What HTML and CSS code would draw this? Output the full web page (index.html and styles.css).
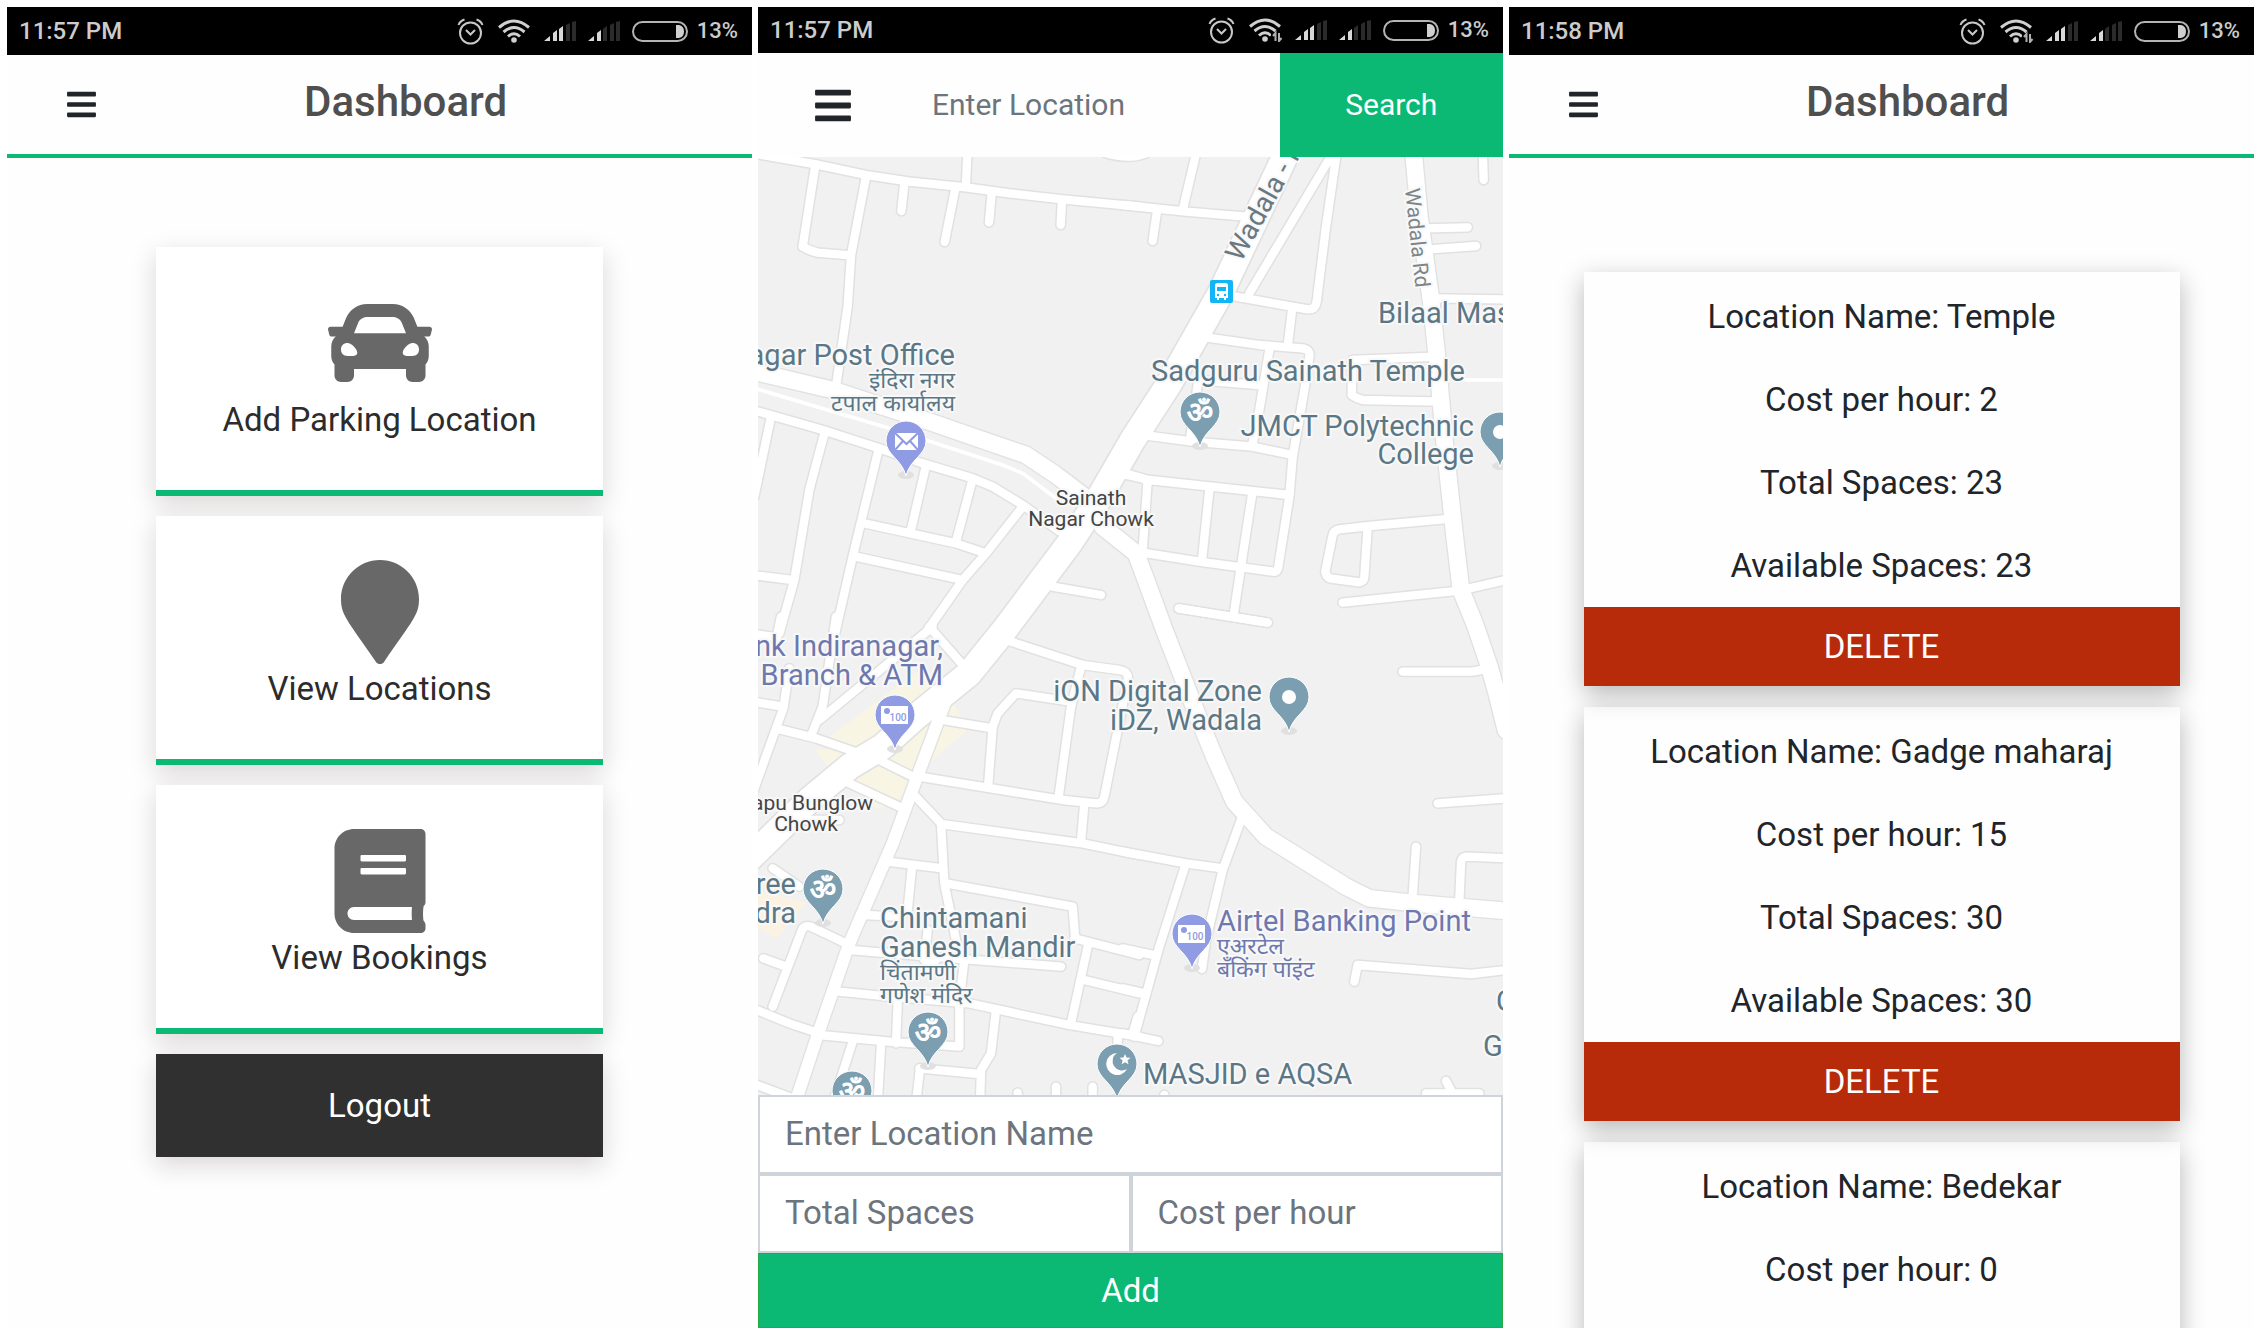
FILE: index.html
```html
<!DOCTYPE html>
<html lang="en">
<head>
<meta charset="utf-8">
<meta name="viewport" content="width=device-width, initial-scale=1">
<title>Parking dashboard</title>
<link rel="stylesheet" href="styles.css">
</head>
<body>
<svg class="defs" aria-hidden="true">
  <defs>
    <symbol id="i-alarm" viewBox="0 0 27 27"><g fill="none" stroke="#c8c8c8" stroke-width="2"><circle cx="13.500" cy="15" r="10.500"/><path d="M9 12l4.500 4.500L18 12M1.500 7Q3 3 7.500 1.500M25.500 7Q24 3 19.500 1.500"/></g></symbol>
    <symbol id="i-wifi" viewBox="0 0 36 24"><g fill="none" stroke="#d0d0d0" stroke-width="3"><path d="M3 8.500Q18 -4.500 33 8.500M7.500 13Q18 4 28.500 13M12 17.500Q18 12 24 17.500"/></g><circle cx="18" cy="21" r="2.800" fill="#d0d0d0"/></symbol>
    <symbol id="i-wifi-data" viewBox="0 0 36 24"><g fill="none" stroke="#d0d0d0" stroke-width="3"><path d="M3 8.500Q18 -4.500 33 8.500M7.500 13Q18 4 28.500 13M12 17.500Q18 12 24 17.500"/></g><circle cx="18" cy="21" r="2.800" fill="#d0d0d0"/><path d="M24 14h11v10h-11z" fill="#000"/><path d="M28.500 23v-8l-2.500 3M32 15v8l2.500-3" fill="none" stroke="#b0b0b0" stroke-width="2"/></symbol>
    <symbol id="i-signal-3" viewBox="0 0 32 20"><g fill="#d8d8d8"><path d="M0 20l6-5v5zM9 12l4-3v11H9zM15 8l4-3v15h-4z"/></g><path d="M22 4l4-2v18h-4zM28 1l4-1v20h-4z" fill="#2b2b2b"/></symbol>
    <symbol id="i-signal-2" viewBox="0 0 32 20"><g fill="#d8d8d8"><path d="M0 20l6-5v5zM9 12l4-3v11H9z"/></g><path d="M15 8l4-3v15h-4zM22 4l4-2v18h-4zM28 1l4-1v20h-4z" fill="#2b2b2b"/></symbol>
    <symbol id="i-battery" viewBox="0 0 56 21"><rect x="1" y="1" width="54" height="19" rx="9.500" fill="none" stroke="#b4b4b4" stroke-width="2"/><path d="M44 4h3Q52 5 52 10.500T47 17h-3z" fill="#d0d0d0"/></symbol>
    <symbol id="i-bars" viewBox="0 0 448 512"><path d="M16 132h416c8.837 0 16-7.163 16-16V76c0-8.837-7.163-16-16-16H16C7.163 60 0 67.163 0 76v40c0 8.837 7.163 16 16 16zm0 160h416c8.837 0 16-7.163 16-16v-40c0-8.837-7.163-16-16-16H16c-8.837 0-16 7.163-16 16v40c0 8.837 7.163 16 16 16zm0 160h416c8.837 0 16-7.163 16-16v-40c0-8.837-7.163-16-16-16H16c-8.837 0-16 7.163-16 16v40c0 8.837 7.163 16 16 16z"/></symbol>
    <symbol id="i-car" viewBox="0 0 512 512"><path d="M499.990 176h-59.870l-16.640-41.600C406.380 91.630 365.570 64 319.500 64h-127c-46.060 0-86.880 27.630-103.990 70.400L71.870 176H12.010C4.200 176-1.530 183.340.370 190.910l6 24C7.700 220.250 12.500 224 18.010 224h20.070C24.650 235.730 16 252.780 16 272v48c0 16.120 6.160 30.670 16 41.930V416c0 17.670 14.330 32 32 32h32c17.670 0 32-14.330 32-32v-32h256v32c0 17.670 14.330 32 32 32h32c17.670 0 32-14.330 32-32v-54.070c9.840-11.250 16-25.800 16-41.930v-48c0-19.220-8.650-36.270-22.070-48H494c5.510 0 10.310-3.750 11.640-9.090l6-24c1.890-7.570-3.840-14.910-11.650-14.910zm-352.060-17.830c7.290-18.220 24.940-30.170 44.570-30.170h127c19.630 0 37.280 11.950 44.570 30.170L384 208H128l19.930-49.830zM96 319.800c-19.200 0-32-12.760-32-31.900S76.800 256 96 256s48 28.710 48 47.850-28.800 15.950-48 15.950zm320 0c-19.200 0-48 3.190-48-15.950S396.800 256 416 256s32 12.760 32 31.900-12.800 31.900-32 31.900z"/></symbol>
    <symbol id="i-marker" viewBox="0 0 384 512"><path d="M172.268 501.670C26.970 291.031 0 269.413 0 192 0 85.961 85.961 0 192 0s192 85.961 192 192c0 77.413-26.970 99.031-172.268 309.670-9.535 13.774-29.930 13.773-39.464 0z"/></symbol>
    <symbol id="i-book" viewBox="0 0 448 512"><path d="M448 360V24c0-13.300-10.700-24-24-24H96C43 0 0 43 0 96v320c0 53 43 96 96 96h328c13.300 0 24-10.700 24-24v-16c0-7.500-3.500-14.300-8.900-18.700-4.200-15.400-4.200-59.300 0-74.700 5.400-4.300 8.900-11.100 8.900-18.600zM128 134c0-3.300 2.700-6 6-6h212c3.300 0 6 2.700 6 6v20c0 3.300-2.700 6-6 6H134c-3.300 0-6-2.700-6-6v-20zm0 64c0-3.300 2.700-6 6-6h212c3.300 0 6 2.700 6 6v20c0 3.300-2.700 6-6 6H134c-3.300 0-6-2.700-6-6v-20zm253.400 250H96c-17.700 0-32-14.300-32-32 0-17.600 14.400-32 32-32h285.400c-1.900 17.100-1.900 46.900 0 64z"/></symbol>
  </defs>
</svg>

<main class="screens">

  <section class="phone" aria-label="Owner dashboard">
    <div class="status">
      <span class="clock">11:57 PM</span>
      <svg class="alarm"><use href="#i-alarm"/></svg>
      <svg class="wifi"><use href="#i-wifi"/></svg>
      <svg class="signal"><use href="#i-signal-3"/></svg>
      <svg class="signal"><use href="#i-signal-2"/></svg>
      <span class="power"><svg class="battery"><use href="#i-battery"/></svg>13%</span>
    </div>
    <header class="topbar">
      <button class="menu" aria-label="Menu"><svg><use href="#i-bars"/></svg></button>
      <h1>Dashboard</h1>
    </header>
    <nav class="tiles">
      <a class="tile" href="#add"><svg><use href="#i-car"/></svg>Add Parking Location</a>
      <a class="tile" href="#locations"><svg><use href="#i-marker"/></svg>View Locations</a>
      <a class="tile" href="#bookings"><svg><use href="#i-book"/></svg>View Bookings</a>
      <button class="logout">Logout</button>
    </nav>
  </section>

  <section class="phone" aria-label="Add a location">
    <div class="status status-slim">
      <span class="clock">11:57 PM</span>
      <svg class="alarm"><use href="#i-alarm"/></svg>
      <svg class="wifi"><use href="#i-wifi-data"/></svg>
      <svg class="signal"><use href="#i-signal-3"/></svg>
      <svg class="signal"><use href="#i-signal-2"/></svg>
      <span class="power"><svg class="battery"><use href="#i-battery"/></svg>13%</span>
    </div>
    <form class="search">
      <button type="button" class="menu menu-large" aria-label="Menu"><svg><use href="#i-bars"/></svg></button>
      <input type="text" placeholder="Enter Location" aria-label="Enter Location">
      <button type="button" class="go">Search</button>
    </form>
    <div class="map">
      <svg viewBox="0 0 745 938" preserveAspectRatio="xMidYMin slice" role="img" aria-label="Map of Wadala">
        <defs>
          <g id="minor">
            <g transform="translate(-6 -21)">
              <path d="M-10 10L180 43L330 75L460 95L630 112L760 130L920 148L1150 170"/>
              <path d="M178 45L140 290Q160 302 185 308L285 316M330 80L285 316L275 470L240 710"/>
              <path d="M445 100L436 183M635 -10L630 100M598 115L566 276M707 130L699 217M918 150L914 225M1050 10Q1120 30 1170 10"/>
              <path d="M-10 780L200 840L370 895L500 940L650 985L710 1010L800 1065L920 1150"/>
              <path d="M45 800L-5 1040M205 850L160 1020L115 1290L70 1450M-10 1275L110 1290M365 910L290 1220L235 1460M508 955L465 1140M648 995L600 1175"/>
              <path d="M325 1120L600 1180L690 1210M300 1220L620 1290M800 1070L690 1210L620 1290L515 1440M890 1310L1035 1335M1090 965L1160 985"/>
            </g>
            <g transform="translate(1104 -21)">
              <path d="M-10 165L180 185L360 200M215 -10L170 180M92 190L80 273M620 10L370 430M632 10L600 230L572 455Q568 480 545 478L330 440M498 480L485 590"/>
              <path d="M225 560L400 585L530 595Q555 600 550 620L535 720L500 920L490 1040L457 1250Q455 1268 440 1265L330 1250L220 1235L50 1208"/>
              <path d="M430 600L400 780L378 890M215 690L400 705M217 690L192 870M50 855L200 875L380 890L500 915M-10 972L70 990L490 1035M65 990L50 1200M250 1020L228 1230M378 1035L345 1250L322 1400M158 1375L425 1418"/>
              <path d="M1070 -10L1073 90M900 235L1025 232M910 298L1050 288M920 445L1140 448M930 620L680 630L677 735Q690 745 710 750L945 755"/>
              <path d="M985 1105L730 1128L640 1138Q622 1142 620 1155L598 1265Q600 1280 612 1285L700 1297Q715 1292 715 1280L725 1130M650 1358L1000 1322L1140 1290"/>
            </g>
            <g transform="translate(-6 1389)">
              <path d="M-10 42L62 52M75 -10L62 52M240 -10L200 260L168 340M100 145L82 265L60 325L-10 520M-10 245L80 260M60 325L180 355L310 400"/>
              <path d="M530 20L190 300M520 20L625 140M750 60L980 135L1090 150Q1120 155 1115 180L1085 330L1045 530Q1040 552 1020 550L920 540L490 470"/>
              <path d="M975 140L945 260L908 530M945 245L780 220L725 280L710 320L697 490M560 300L710 325M350 410L480 475M280 490L430 560M470 520L555 610L565 790L600 960L625 1020L610 1150"/>
              <path d="M555 612L980 670L1150 705M985 550L975 665M395 725L560 745M468 740L455 870M570 790L950 860L958 960M330 885L420 890M285 990L400 1000L915 1040M515 930L505 1020L540 1020"/>
              <path d="M955 955L1150 1005M995 980L945 1210M985 1080L1150 1120M250 1115L400 1130L640 1150L940 1215L1150 1250M425 1150L420 1270M190 1245L400 1265L610 1280V1150"/>
              <path d="M720 1170L705 1300L675 1350L672 1450M490 1345L670 1362M492 1345L480 1450M375 1275L365 1450M290 1265L230 1450M-10 1165L100 1210L190 1240M-10 1390L150 1450"/>
              <path d="M280 975L165 920Q150 915 140 925L50 1160M22 1015L85 1038M50 745L130 800M150 600L250 600M785 1418V1460M900 1400V1460M1010 1400V1460M1085 1240V1290M1145 1190L1130 1240"/>
            </g>
            <g transform="translate(1104 1389)">
              <path d="M158 -35L425 8M830 155L1040 155L1090 145M935 550L1140 535M870 680L860 830M1000 840L1005 730Q1005 710 1025 710L1140 715"/>
              <path d="M345 600L290 750L240 960L228 1047M-10 695L180 730L290 745M175 745L100 980L25 1250M-10 985L90 1007M-10 1105L55 1120M-10 1240L97 1263"/>
              <path d="M685 1085L695 1035L1035 1062L1140 1050M960 1383L985 1430M115 1425V1450M900 1420H1060"/>
            </g>
          </g>
          <g id="avenue">
            <path d="M-10 644L224 699L514 794L804 894L894 954L1000 1035"/>
            <path d="M1966 -20L1984 179L2019 429L2039 619L2059 849L2089 1129L2109 1299L2150 1400L2194 1529L2214 1600L2244 1720"/>
            <path d="M1034 1109L1134 1189L1164 1269L1219 1419L1324 1689L1369 1799L1429 1934L1524 2039L1764 2189L1834 2224L1974 2239L2250 2262"/>
          </g>
          <g id="cross"><path d="M564 1629L474 1869L404 2059L274 2359L184 2619L114 2830"/></g>
          <g id="highway"><path d="M1590 -21L1390 404L1234 679L1124 849L1014 1039L934 1159L739 1419L634 1549L474 1679L374 1769L274 1829L154 1929L-20 2099"/></g>
          <g id="pin"><ellipse cx="0" cy="34" rx="8" ry="4" class="pin-shadow"/><path d="M-20 0A20 20 0 0 1 20 0C20 14 4 18 0 35C-4 18 -20 14 -20 0Z"/></g>
          <g id="cash"><rect x="-14" y="-9" width="27" height="18" fill="#fff"/><circle cx="-8" cy="-4" r="3" fill="#8f9be3"/></g>
        </defs>
        <rect width="745" height="938" fill="#f1f1f1"/>
        <g transform="scale(.333333)">
          <path d="M484 1539L214 1739L284 1774L169 1779L219 1839L264 1879L354 1954L414 1939L524 1809L629 1719L584 1634Z" fill="#f8f5e4"/>
          <path d="M0 2200L144 2239L54 2344L0 2310Z" fill="#fcf2e2"/>
          <g class="casing">
            <use href="#minor" stroke-width="34"/><use href="#cross" stroke-width="44"/><use href="#avenue" stroke-width="58"/><use href="#highway" stroke-width="86"/>
          </g>
          <g class="road">
            <use href="#minor" stroke-width="25"/><use href="#cross" stroke-width="36"/><use href="#avenue" stroke-width="50"/><use href="#highway" stroke-width="76"/>
            <path d="M-10 694L394 814L734 924L794 949L894 1024M2124 669H2240" stroke-width="11"/>
          </g>
        </g>
        <g class="road-label">
          <text x="483" y="106" transform="rotate(-61 483 106)" class="big-road">Wadala - Rd</text>
          <text x="647" y="32" transform="rotate(84 647 32)" class="small-road">Wadala Rd</text>
        </g>
        <g class="bus" transform="translate(452 123)">
          <rect width="23" height="23" rx="2" fill="#12b5f5"/>
          <path d="M5 5Q5 3 8 3H15Q18 3 18 5V18H16V20H14V18H9V20H7V18H5Z" fill="#fff"/>
          <path d="M7 7H16V11H7Z" fill="#12b5f5"/><circle cx="8" cy="15" r="1.200" fill="#12b5f5"/><circle cx="15" cy="15" r="1.200" fill="#12b5f5"/>
        </g>
        <g class="pins-service">
          <use href="#pin" x="148" y="284"/><use href="#pin" x="137" y="558"/><use href="#pin" x="434" y="777"/>
        </g>
        <g class="pins-place">
          <use href="#pin" x="442" y="255"/><use href="#pin" x="742" y="275"/><use href="#pin" x="65" y="732"/><use href="#pin" x="170" y="875"/><use href="#pin" x="94" y="934"/><use href="#pin" x="359" y="907"/><use href="#pin" x="531" y="540"/>
        </g>
        <rect x="137" y="276" width="23" height="17" fill="#fff"/>
        <path d="M137 276L148.500 287L160 276M137 293L145 284M160 293L152 284" fill="none" stroke="#8f9be3" stroke-width="2"/>
        <use href="#cash" x="137" y="558"/><use href="#cash" x="434" y="777"/>
        <g class="cash-label"><text x="140" y="564">100</text><text x="437" y="783">100</text></g>
        <circle cx="742" cy="275" r="7" fill="#fff"/><circle cx="531" cy="540" r="7" fill="#fff"/>
        <path d="M359 896A11 11 0 1 0 369 912A9 9 0 1 1 359 896Z" fill="#fff"/>
        <path d="M367 897l1.500 3.500 4 .300-3 2.600 1 3.800-3.500-2-3.400 2 1-3.800-3-2.600 3.900-.300z" fill="#fff"/>
        <g class="om"><text x="442" y="265">ॐ</text><text x="65" y="742">ॐ</text><text x="170" y="885">ॐ</text><text x="94" y="944">ॐ</text></g>
        <g class="place">
          <g class="end">
            <text x="197" y="208">Indira Nagar Post Office</text>
            <text x="197" y="231" class="hindi">इंदिरा नगर</text>
            <text x="197" y="254" class="hindi">टपाल कार्यालय</text>
            <text x="716" y="279">JMCT Polytechnic</text>
            <text x="716" y="307">College</text>
            <text x="504" y="544">iON Digital Zone</text>
            <text x="504" y="573">iDZ, Wadala</text>
            <text x="38" y="737">Shree</text>
            <text x="38" y="766">Kendra</text>
          </g>
          <text x="620" y="166">Bilaal Masjid</text>
          <text x="393" y="224">Sadguru Sainath Temple</text>
          <text x="122" y="771">Chintamani</text>
          <text x="122" y="800">Ganesh Mandir</text>
          <text x="122" y="823" class="hindi">चिंतामणी</text>
          <text x="122" y="846" class="hindi">गणेश मंदिर</text>
          <text x="385" y="927">MASJID e AQSA</text>
          <text x="738" y="854">C</text>
          <text x="725" y="899">G</text>
        </g>
        <g class="service">
          <g class="end"><text x="185" y="499">Bank Indiranagar,</text><text x="185" y="528">Branch &amp; ATM</text></g>
          <text x="459" y="774">Airtel Banking Point</text>
          <text x="459" y="797" class="hindi">एअरटेल</text>
          <text x="459" y="820" class="hindi">बँकिंग पॉइंट</text>
        </g>
        <g class="junction">
          <text x="333" y="348">Sainath</text><text x="333" y="369">Nagar Chowk</text>
          <text x="48" y="653">Bapu Bunglow</text><text x="48" y="674">Chowk</text>
        </g>
      </svg>
    </div>
    <form class="add">
      <input class="wide" type="text" placeholder="Enter Location Name" aria-label="Enter Location Name">
      <input type="text" placeholder="Total Spaces" aria-label="Total Spaces">
      <input type="text" placeholder="Cost per hour" aria-label="Cost per hour">
      <button type="button" class="wide">Add</button>
    </form>
  </section>

  <section class="phone" aria-label="Locations">
    <div class="status">
      <span class="clock">11:58 PM</span>
      <svg class="alarm"><use href="#i-alarm"/></svg>
      <svg class="wifi"><use href="#i-wifi-data"/></svg>
      <svg class="signal"><use href="#i-signal-3"/></svg>
      <svg class="signal"><use href="#i-signal-2"/></svg>
      <span class="power"><svg class="battery"><use href="#i-battery"/></svg>13%</span>
    </div>
    <header class="topbar">
      <button class="menu" aria-label="Menu"><svg><use href="#i-bars"/></svg></button>
      <h1>Dashboard</h1>
    </header>
    <div class="locations">
      <article class="location">
        <p>Location Name: Temple</p>
        <p>Cost per hour: 2</p>
        <p>Total Spaces: 23</p>
        <p>Available Spaces: 23</p>
        <button>DELETE</button>
      </article>
      <article class="location">
        <p>Location Name: Gadge maharaj</p>
        <p>Cost per hour: 15</p>
        <p>Total Spaces: 30</p>
        <p>Available Spaces: 30</p>
        <button>DELETE</button>
      </article>
      <article class="location">
        <p>Location Name: Bedekar</p>
        <p>Cost per hour: 0</p>
      </article>
    </div>
  </section>

</main>
</body>
</html>
```
FILE: styles.css
```css
* { box-sizing: border-box; }

body {
  margin: 0;
  background: #fff;
  color: #212529;
  font: 33px/50px Roboto, "Noto Sans", sans-serif;
}

button, input { font: inherit; border: 0; border-radius: 0; margin: 0; padding: 0; }
button { cursor: pointer; }
svg { display: block; }
.defs { position: absolute; width: 0; height: 0; }

.screens {
  display: grid;
  grid-template-columns: repeat(3, minmax(0, 1fr));
  gap: 6px;
  height: 100vh;
  padding: 7px;
}

.phone {
  display: flex;
  flex-direction: column;
  min-height: 0;
  overflow: hidden;
  background: #fefefe;
}

/* Status bar */
.status {
  display: flex;
  flex: none;
  align-items: center;
  gap: 12px;
  height: 48px;
  padding: 0 14px 0 12px;
  background: #000;
  color: #ccc;
  font-size: 24px;
  font-weight: 500;
  line-height: 28px;
}
.status-slim { height: 46px; }
.clock { flex: 1; }
.alarm { width: 27px; height: 27px; }
.wifi { width: 36px; height: 24px; }
.signal { width: 32px; height: 20px; }
.battery { width: 56px; height: 21px; }
.power { display: flex; align-items: center; gap: 9px; font-size: 22px; }

/* Top bars */
.topbar {
  display: grid;
  flex: none;
  grid-template-columns: 20% 1fr 13%;
  align-items: center;
  height: 103px;
  border-bottom: 4px solid #0bb974;
}
.topbar h1 {
  margin: 0;
  padding-bottom: 6px;
  color: #4f4f4f;
  font-size: 42px;
  font-weight: 500;
  line-height: 49px;
  text-align: center;
}
.menu {
  display: grid;
  place-items: center;
  background: none;
}
.menu svg { width: 29px; height: 33px; fill: #212529; }
.menu-large svg { width: 36px; height: 41px; }

.search {
  display: grid;
  flex: none;
  grid-template-columns: 20% 50% 30%;
  height: 104px;
  font-size: 30px;
}
.search input { min-width: 0; padding: 0 25px; background: none; }
.go { background: #0bb974; color: #fff; }
::placeholder { color: #6c757d; opacity: 1; }

/* Dashboard tiles */
.tiles {
  display: flex;
  flex-direction: column;
  gap: 20px;
  width: 60%;
  margin: 0 auto;
  padding-top: 89px;
}
.tile {
  display: flex;
  flex-direction: column;
  align-items: center;
  padding: 44px 0 45px;
  border-bottom: 6px solid #0bb974;
  background: #fff;
  box-shadow: 0 8px 24px rgba(40, 20, 20, .17);
  color: #2c2c2c;
  text-decoration: none;
}
.tile svg { width: 104px; height: 104px; fill: #686868; }
.logout {
  height: 103px;
  background: #303030;
  box-shadow: 0 8px 24px rgba(40, 20, 20, .17);
  color: #fff;
}

/* Map */
.map { flex: 1; min-height: 0; overflow: hidden; }
.map svg { width: 100%; height: 100%; }
.casing, .road { fill: none; stroke-linecap: round; stroke-linejoin: round; }
.casing { stroke: #e1e1e1; }
.road { stroke: #fff; }
.map text { stroke: #f8f8f8; stroke-width: 4px; stroke-linejoin: round; paint-order: stroke; }
.place, .service { font-size: 29px; }
.place { fill: #5b7785; }
.service { fill: #6e78ae; }
.hindi { font-family: "Noto Sans Devanagari", "Noto Sans", sans-serif; font-size: 23px; }
.end { text-anchor: end; }
.junction { fill: #444; font-size: 21px; text-anchor: middle; }
.road-label { fill: #687981; }
.big-road { font-size: 28px; }
.small-road { fill: #7c8588; font-size: 21px; }
.pins-service, .pins-place { stroke: #fff; stroke-width: 1px; }
.pins-service { fill: #8f9be3; }
.pins-place { fill: #7b9eb0; }
.pin-shadow { fill: #e0e0e0; stroke: none; }
.map .om text { fill: #fff; stroke: #fff; stroke-width: 1px; font-size: 29px; text-anchor: middle; }
.map .cash-label text { fill: #8f9be3; stroke: none; font-size: 10px; font-weight: 500; text-anchor: middle; }

/* Add form */
.add {
  display: grid;
  flex: none;
  grid-template-columns: 1fr 1fr;
}
.add input {
  min-width: 0;
  height: 79px;
  padding: 0 25px 2px;
  border: 2px solid #ced4da;
  background: #fff;
}
.add .wide { grid-column: 1 / -1; }
.add button {
  height: 75px;
  border: 1px solid #28a745;
  background: #0bb974;
  color: #fff;
}

/* Location cards */
.locations {
  display: flex;
  flex-direction: column;
  gap: 21px;
  width: 80%;
  margin: 0 auto;
  padding-top: 114px;
}
.location {
  display: flex;
  flex-direction: column;
  gap: 33px;
  padding-top: 20px;
  box-shadow: 0 8px 24px rgba(0, 0, 0, .28);
  text-align: center;
}
.location p { margin: 0; }
.location button {
  height: 79px;
  margin-top: -17px;
  background: #b72b0a;
  color: #fff;
}
.location:last-child { padding-bottom: 200px; }
```
